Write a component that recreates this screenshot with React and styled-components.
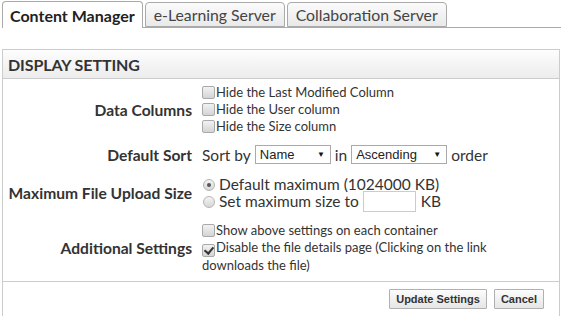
import styled, { createGlobalStyle } from 'styled-components';

// ------------------------------------ Global ----------------------------------

const GlobalStyle = createGlobalStyle`
  body {
    margin: 0;
    background: #fff;
    font-family: Lato, "Open Sans", sans-serif;
    color: #333;
  }
`;

const Page = styled.div`
  width: 561px;
  height: 316px;
  padding: 1px 0 0 2px;
  box-sizing: border-box;
  overflow: hidden;
`;

// ------------------------------------ Tabs ----------------------------------

const TabBar = styled.div`
  display: flex;
  align-items: flex-end;
  gap: 2px;
  height: 26px;
  border-bottom: 1px solid #aaa;
`;

const Tab = styled.div`
  display: flex;
  align-items: center;
  height: ${(p) => (p.$active ? '27px' : '25px')};
  margin-bottom: ${(p) => (p.$active ? '-1px' : '0')};
  padding: 0 ${(p) => (p.$active ? '7px' : '8px')};
  box-sizing: border-box;
  border: 1px solid #aaa;
  border-bottom: ${(p) => (p.$active ? 'none' : '1px solid #aaa')};
  border-radius: 4px 4px 0 0;
  background: ${(p) =>
    p.$active ? '#fff' : 'linear-gradient(#fbfbfb, #e9e9e9)'};
  font-size: ${(p) => (p.$active ? '16px' : '15.8px')};
  font-weight: ${(p) => (p.$active ? 700 : 400)};
  color: ${(p) => (p.$active ? '#222' : '#444')};
  white-space: nowrap;
`;

// ------------------------------------ Panel ----------------------------------

const Panel = styled.section`
  margin-top: 21px;
  width: 558px;
  border: 1px solid #ccc;
  box-sizing: border-box;
`;

const PanelHeader = styled.h2`
  margin: 0;
  height: 28px;
  display: flex;
  align-items: center;
  padding-left: 5px;
  background: linear-gradient(#fdfdfd, #ececec);
  border-bottom: 1px solid #ccc;
  font-size: 16px;
  font-weight: 700;
  letter-spacing: -0.1px;
  color: #333;
`;

const Form = styled.div`
  display: grid;
  grid-template-columns: 189px 1fr;
  column-gap: 10px;
  align-items: center;
  padding: 5px 0 7px 0;
  border-bottom: 1px solid #ccc;
`;

const Label = styled.div`
  margin-top: ${(p) => p.$top || 0}px;
  text-align: right;
  font-size: 15.6px;
  font-weight: 700;
  color: #333;
  white-space: nowrap;
`;

const Field = styled.div`
  margin-top: ${(p) => p.$top || 0}px;
  max-width: 300px;
  display: flex;
  flex-direction: column;
  font-size: ${(p) => (p.$small ? '13px' : '15.5px')};
  line-height: 17px;
`;

const Line = styled.label`
  display: flex;
  align-items: center;
  gap: ${(p) => (p.$radio ? '4px' : '0')};
`;

const Inline = styled.div`
  margin-top: ${(p) => p.$top || 0}px;
  display: flex;
  align-items: center;
  gap: 4px;
  font-size: 15.5px;
`;

// ------------------------------------ Inputs ----------------------------------

const Check = styled.input.attrs({ type: 'checkbox' })`
  appearance: none;
  margin: 0 1px 0 0;
  width: 13px;
  height: 13px;
  flex: none;
  border: 1px solid #a9a9a9;
  border-radius: 2px;
  box-sizing: border-box;
  background: linear-gradient(#f2f2f2, #d4d4d4);
  display: ${(p) => (p.$inline ? 'inline-grid' : 'grid')};
  vertical-align: -2px;
  place-content: center;

  &:checked::after {
    content: '';
    width: 4px;
    height: 7px;
    margin-top: -2px;
    border: solid #333;
    border-width: 0 2px 2px 0;
    transform: rotate(40deg);
  }
`;

const Radio = styled.input.attrs({ type: 'radio' })`
  appearance: none;
  margin: 0 0 0 1px;
  width: 12px;
  height: 12px;
  flex: none;
  border: 1px solid #b5b5b5;
  border-radius: 50%;
  box-sizing: border-box;
  background: linear-gradient(#f4f4f4, #d6d6d6);
  display: grid;
  place-content: center;

  &:checked::after {
    content: '';
    width: 4px;
    height: 4px;
    border-radius: 50%;
    background: #555;
  }
`;

const SelectBox = styled.span`
  position: relative;
  display: inline-flex;

  &::after {
    content: '▼';
    position: absolute;
    right: 6px;
    top: 4px;
    font-size: 8px;
    color: #111;
    pointer-events: none;
  }
`;

const Select = styled.select`
  appearance: none;
  width: ${(p) => p.$w}px;
  height: 19px;
  padding: 0 0 0 4px;
  border: 1px solid #aaa;
  border-radius: 0;
  background: #fff;
  font-family: "Liberation Sans", Arial, sans-serif;
  font-size: 13px;
  color: #222;
`;

const SizeInput = styled.input`
  width: 53px;
  height: 21px;
  margin: -2px 1px -2px 0;
  padding: 0;
  box-sizing: border-box;
  border: 1px solid #ccc;
  font-size: 13px;
`;

// ------------------------------------ Footer ----------------------------------

const Footer = styled.div`
  display: flex;
  justify-content: flex-end;
  align-items: center;
  gap: 7px;
  height: 34px;
  padding-right: 15px;
`;

const Button = styled.button`
  height: 20px;
  padding: 0 6px;
  border: 1px solid #b0b0b0;
  border-radius: 1px;
  background: linear-gradient(#fcfcfc, #e6e6e6);
  font-family: "Liberation Sans", Arial, sans-serif;
  font-size: 11px;
  font-weight: 700;
  color: #333;
`;

// ------------------------------------ App ----------------------------------

export default function App() {
  return (
    <Page>
      <GlobalStyle />
      <TabBar>
        <Tab $active>Content Manager</Tab>
        <Tab>e-Learning Server</Tab>
        <Tab>Collaboration Server</Tab>
      </TabBar>

      <Panel>
        <PanelHeader>DISPLAY SETTING</PanelHeader>
        <Form>
          <Label>Data Columns</Label>
          <Field $small>
            <Line><Check />Hide the Last Modified Column</Line>
            <Line><Check />Hide the User column</Line>
            <Line><Check />Hide the Size column</Line>
          </Field>

          <Label $top={10}>Default Sort</Label>
          <Inline $top={10}>
            Sort by
            <SelectBox>
              <Select $w={76} defaultValue="name">
                <option value="name">Name</option>
                <option value="date">Date</option>
                <option value="size">Size</option>
              </Select>
            </SelectBox>
            in
            <SelectBox>
              <Select $w={96} defaultValue="asc">
                <option value="asc">Ascending</option>
                <option value="desc">Descending</option>
              </Select>
            </SelectBox>
            order
          </Inline>

          <Label $top={12}>Maximum File Upload Size</Label>
          <Field $top={12}>
            <Line $radio><Radio name="max" defaultChecked />Default maximum (1024000 KB)</Line>
            <Line $radio>
              <Radio name="max" />Set maximum size to <SizeInput type="text" /> KB
            </Line>
          </Field>

          <Label $top={12}>Additional Settings</Label>
          <Field $small $top={12}>
            <Line><Check />Show above settings on each container</Line>
            <div>
              <Check $inline defaultChecked />
              Disable the file details page (Clicking on the link downloads the file)
            </div>
          </Field>
        </Form>
        <Footer>
          <Button>Update Settings</Button>
          <Button>Cancel</Button>
        </Footer>
      </Panel>
    </Page>
  );
}
